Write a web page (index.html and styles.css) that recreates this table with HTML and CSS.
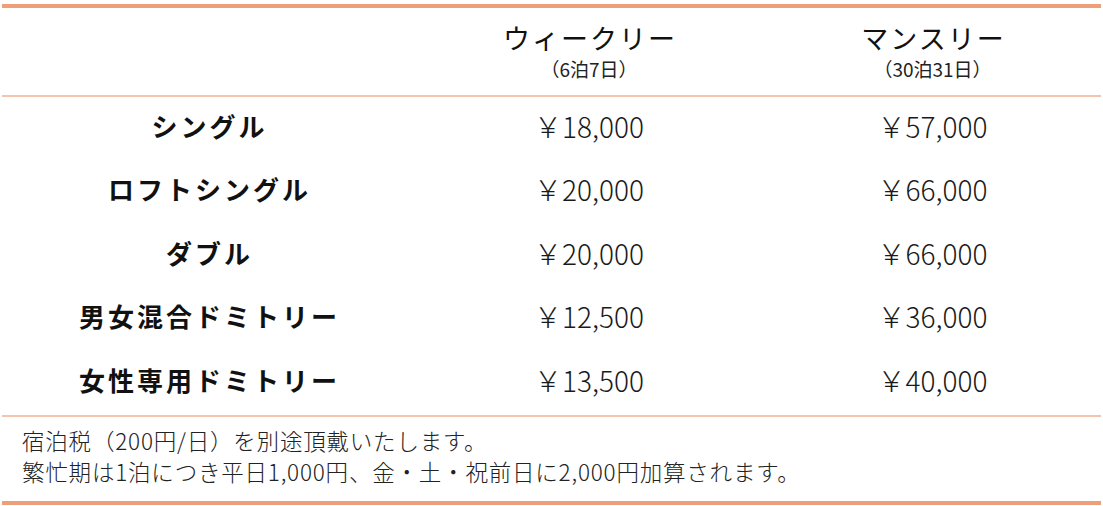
FILE: index.html
```html
<!DOCTYPE html>
<html lang="ja">
<head>
<meta charset="utf-8">
<title>料金表</title>
<link rel="stylesheet" href="styles.css">
</head>
<body>
<div class="pricing">
  <div class="row head">
    <div class="cell"></div>
    <div class="cell"><div class="plan">ウィークリー</div><div class="sub">（6泊7日）</div></div>
    <div class="cell"><div class="plan">マンスリー</div><div class="sub">（30泊31日）</div></div>
  </div>
  <div class="body">
    <div class="row">
      <div class="cell name">シングル</div>
      <div class="cell price">￥18,000</div>
      <div class="cell price">￥57,000</div>
    </div>
    <div class="row">
      <div class="cell name">ロフトシングル</div>
      <div class="cell price">￥20,000</div>
      <div class="cell price">￥66,000</div>
    </div>
    <div class="row">
      <div class="cell name">ダブル</div>
      <div class="cell price">￥20,000</div>
      <div class="cell price">￥66,000</div>
    </div>
    <div class="row">
      <div class="cell name">男女混合ドミトリー</div>
      <div class="cell price">￥12,500</div>
      <div class="cell price">￥36,000</div>
    </div>
    <div class="row">
      <div class="cell name">女性専用ドミトリー</div>
      <div class="cell price">￥13,500</div>
      <div class="cell price">￥40,000</div>
    </div>
  </div>
  <div class="notes">
    <p>宿泊税（200円/日）を別途頂戴いたします。</p>
    <p>繁忙期は1泊につき平日1,000円、金・土・祝前日に2,000円加算されます。</p>
  </div>
</div>
</body>
</html>
```
FILE: styles.css
```css
html, body {
  margin: 0;
  padding: 0;
  background: #fff;
}
body {
  font-family: "Noto Sans CJK JP", "Noto Sans", sans-serif;
  color: #111;
}
.pricing {
  margin: 4px 2px 0;
  border-top: 4px solid #ef9f78;
  border-bottom: 4px solid #ef9f78;
}
.row {
  display: grid;
  grid-template-columns: 412px 350px 1fr;
  align-items: center;
}
.cell {
  display: flex;
  flex-direction: column;
  align-items: center;
  justify-content: center;
}
.head {
  height: 87px;
  border-bottom: 2px solid #f4c5ae;
}
.plan {
  font-size: 27px;
  line-height: 30px;
  letter-spacing: 2px;
  padding-left: 2px;
  font-weight: 400;
}
.sub {
  margin-top: 5px;
  font-size: 19px;
  line-height: 22px;
  font-weight: 400;
  color: #222;
}
.body {
  border-bottom: 2px solid #f4c5ae;
}
.body .row {
  height: 63.5px;
}
.body .cell {
  padding-bottom: 6px;
}
.name {
  font-size: 26px;
  font-weight: 600;
  letter-spacing: 3px;
  padding-left: 3px;
  line-height: 32px;
}
.price {
  font-size: 28px;
  font-weight: 300;
  line-height: 32px;
  color: #1a1a1a;
}
.notes {
  padding: 8px 20px 14px;
}
.notes p {
  margin: 0;
  font-size: 22.5px;
  line-height: 31px;
  font-weight: 300;
  color: #222;
  letter-spacing: 0.8px;
}
```
